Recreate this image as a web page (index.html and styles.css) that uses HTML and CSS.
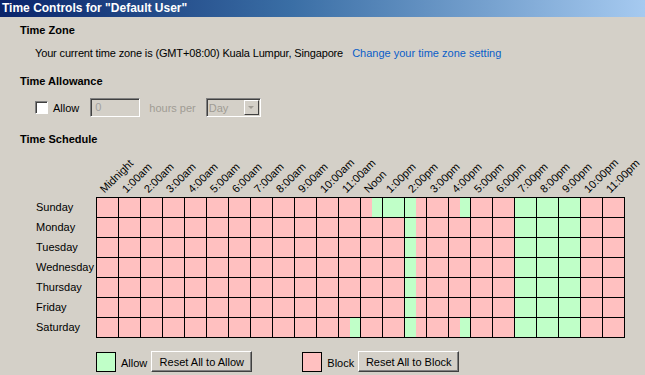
FILE: index.html
```html
<!DOCTYPE html>
<html lang="en">
<head>
  <meta charset="UTF-8">
  <title>Time Controls</title>
  <link rel="stylesheet" href="styles.css">
</head>
<body>
  <div class="titlebar">Time Controls for "Default User"</div>

  <div class="content">
    <h3 class="heading first">Time Zone</h3>
    <p class="zone"><span class="zone-text">Your current time zone is (GMT+08:00) Kuala Lumpur, Singapore</span> <a class="link" href="#">Change your time zone setting</a></p>

    <h3 class="heading">Time Allowance</h3>
    <div class="allowance">
      <label class="check"><span class="box"></span>Allow</label>
      <div class="field">0</div>
      <span class="dim">hours per</span>
      <div class="dropdown"><span>Day</span><span class="arrow"></span></div>
    </div>

    <h3 class="heading">Time Schedule</h3>
    <div class="hours" id="hours"></div>
    <div class="schedule">
      <div class="days" id="days"></div>
      <div class="board" id="board"></div>
    </div>

    <div class="legend">
      <span class="swatch allow"></span>
      <span class="legend-label">Allow</span>
      <button class="btn">Reset All to Allow</button>
      <span class="swatch block"></span>
      <span class="legend-label">Block</span>
      <button class="btn">Reset All to Block</button>
    </div>
  </div>

  <script>
    const hours = ['Midnight', '1:00am', '2:00am', '3:00am', '4:00am', '5:00am', '6:00am', '7:00am',
      '8:00am', '9:00am', '10:00am', '11:00am', 'Noon', '1:00pm', '2:00pm', '3:00pm', '4:00pm',
      '5:00pm', '6:00pm', '7:00pm', '8:00pm', '9:00pm', '10:00pm', '11:00pm'];
    const days = ['Sunday', 'Monday', 'Tuesday', 'Wednesday', 'Thursday', 'Friday', 'Saturday'];

    // allowed half-hour slots per day (0 = 12:00am, 47 = 11:30pm)
    const evening = [38, 39, 40, 41, 42, 43];
    const allowed = [
      [25, 26, 27, 28, 33, ...evening],
      [28, ...evening],
      [28, ...evening],
      [28, ...evening],
      [28, ...evening],
      [28, ...evening],
      [23, 28, 33, ...evening]
    ];

    const hoursRow = document.getElementById('hours');
    hours.forEach(h => {
      hoursRow.innerHTML += `<div class="hour"><span>${h}</span></div>`;
    });

    const dayCol = document.getElementById('days');
    const board = document.getElementById('board');
    days.forEach((d, i) => {
      dayCol.innerHTML += `<div class="day">${d}</div>`;
      for (let h = 0; h < 24; h++) {
        let cell = '<div class="cell">';
        for (let s = 0; s < 2; s++) {
          const slot = h * 2 + s;
          cell += `<span class="${allowed[i].includes(slot) ? 'allow' : 'block'}"></span>`;
        }
        board.innerHTML += cell + '</div>';
      }
    });
  </script>
</body>
</html>
```

FILE: styles.css
```css
body {
  font-family: 'Liberation Sans', Arial, sans-serif;
  font-size: 11px;
  background: #d4d0c8;
  color: #000;
  margin: 0;
  padding: 0;
}
.titlebar {
  height: 17px;
  line-height: 17px;
  padding-left: 2px;
  color: white;
  font-weight: bold;
  font-size: 12px;
  background: linear-gradient(to right, #0a246a, #3a6ea5 45%, #a6caf0);
}
.content {
  padding: 0 0 0 20px;
}
.heading {
  font-size: 11px;
  font-weight: bold;
  margin: 0;
  height: 14px;
  line-height: 14px;
}
.heading.first {
  margin-top: 6px;
}
.zone {
  margin: 9px 0 0 15px;
  line-height: 14px;
}
.zone-text {
  letter-spacing: -0.15px;
}
.link {
  color: #0a5ec8;
  text-decoration: none;
  margin-left: 6px;
}
.zone + .heading {
  margin-top: 14px;
}
.allowance {
  display: flex;
  align-items: center;
  height: 21px;
  margin: 9px 0 0 15px;
}
.check {
  display: flex;
  align-items: center;
}
.box {
  width: 11px;
  height: 11px;
  background: white;
  border: 1px solid;
  border-color: #808080 #fff #fff #808080;
  box-shadow: inset 1px 1px 0 #404040;
  margin-right: 5px;
}
.field {
  width: 44px;
  height: 17px;
  line-height: 17px;
  margin-left: 11px;
  padding-left: 4px;
  color: #a0a0a0;
  border: 1px solid;
  border-color: #808080 #fff #fff #808080;
  box-shadow: inset 1px 1px 0 #404040;
  box-sizing: content-box;
}
.dim {
  color: #a09c94;
  margin-left: 9px;
}
.dropdown {
  display: flex;
  align-items: center;
  justify-content: space-between;
  width: 51px;
  height: 17px;
  margin-left: 10px;
  padding-left: 2px;
  color: #a09c94;
  border: 1px solid;
  border-color: #808080 #fff #fff #808080;
  box-shadow: inset 1px 1px 0 #404040;
}
.arrow {
  width: 15px;
  height: 15px;
  margin-right: 1px;
  background: #d4d0c8;
  border: 1px solid;
  border-color: #fff #404040 #404040 #fff;
  box-sizing: border-box;
  position: relative;
}
.arrow::after {
  content: '';
  position: absolute;
  left: 3px;
  top: 5px;
  border-left: 3px solid transparent;
  border-right: 3px solid transparent;
  border-top: 3px solid #a09c94;
}
.allowance + .heading {
  margin-top: 14px;
}
.hours {
  display: flex;
  margin-left: 76px;
  height: 51px;
}
.hour {
  width: 22px;
  height: 51px;
  display: flex;
  align-items: flex-end;
  white-space: nowrap;
}
.hour span {
  display: inline-block;
  line-height: 12px;
  transform-origin: 0 100%;
  transform: translate(10px, -2px) rotate(-45deg);
}
.schedule {
  display: flex;
  margin-left: 16px;
}
.days {
  width: 60px;
  padding-top: 1px;
}
.day {
  height: 20px;
  line-height: 18px;
}
.board {
  display: grid;
  grid-template-columns: repeat(24, 21px);
  grid-auto-rows: 19px;
  gap: 1px;
  padding: 1px;
  background: #000;
}
.cell {
  display: flex;
}
.cell span {
  flex: 1;
}
.allow {
  background: #c0ffc8;
}
.block {
  background: #ffc0c0;
}
.legend {
  display: flex;
  align-items: center;
  margin: 13px 0 0 76px;
  height: 21px;
}
.swatch {
  width: 18px;
  height: 18px;
  border: 1px solid #000;
}
.legend-label {
  margin: 3px 0 0 5px;
}
.btn {
  font-family: inherit;
  font-size: 11px;
  height: 21px;
  width: 101px;
  padding: 0;
  margin-left: 4px;
  background: #d4d0c8;
  color: #000;
  border: 1px solid;
  border-color: #fff #404040 #404040 #fff;
  box-shadow: inset -1px -1px 0 #808080;
}
.btn + .swatch {
  margin-left: 50px;
}
```
